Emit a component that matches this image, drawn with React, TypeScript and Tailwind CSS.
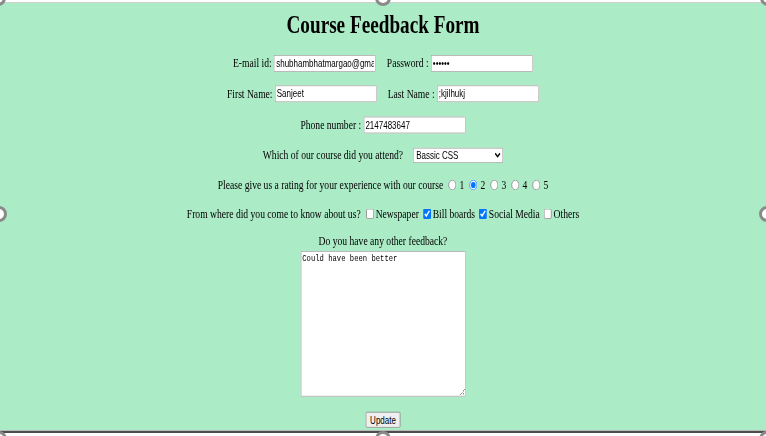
const field =
  "h-[21px] w-[170px] border border-[#a9a9a9] bg-white px-[2px] text-[13.33px] text-black font-['Liberation_Sans',Arial,sans-serif] outline-none"

function Handle({ className }: { className: string }) {
  return (
    <div
      className={
        "absolute h-[16px] w-[16px] rounded-full border-[3px] border-[#8a8a8a] bg-white " +
        className
      }
    />
  )
}

function Row({ h, children }: { h: string; children: React.ReactNode }) {
  return <div className={"flex items-center justify-center whitespace-nowrap " + h}>{children}</div>
}

export default function App() {
  const ratings = ['1', '2', '3', '4', '5']
  const sources = [
    { label: 'Newspaper', checked: false },
    { label: 'Bill boards', checked: true },
    { label: 'Social Media', checked: true },
    { label: 'Others', checked: false },
  ]

  return (
    <div className="relative h-[436px] w-full overflow-hidden bg-white">
      <div className="h-[3px] border-b border-[#d0d0d0]" />

      {/* page body, stretched like the reference image */}
      <div className="flex h-[427px] justify-center overflow-hidden bg-[#abebc6]">
        <div className="w-[1276px] shrink-0 origin-top scale-x-[0.6] scale-y-[0.8] font-['Liberation_Serif','Times_New_Roman',serif] text-[16px] text-black">
          <h1 className="h-[56px] pt-[3px] text-center text-[32px] font-bold leading-normal">
            Course Feedback Form
          </h1>

          <Row h="h-[38px]">
            <span>E-mail id:</span>
            <input className={field + ' ml-[4px] w-[168px]'} defaultValue="shubhambhatmargao@gmail.com" />
            <span className="ml-[18px]">Password :</span>
            <input type="password" className={field + ' ml-[4px]'} defaultValue="123456" />
          </Row>

          <Row h="h-[39px]">
            <span>First Name:</span>
            <input className={field + ' ml-[4px] w-[168px]'} defaultValue="Sanjeet" />
            <span className="ml-[18px]">Last Name :</span>
            <input className={field + ' ml-[4px]'} defaultValue=";kjilhukj" />
          </Row>

          <Row h="h-[38px]">
            <span>Phone number :</span>
            <input className={field + ' ml-[4px]'} defaultValue="2147483647" />
          </Row>

          <Row h="h-[38px]">
            <span>Which of our course did you attend?</span>
            <select
              defaultValue="css"
              className="ml-[17px] h-[19px] w-[150px] border border-[#a9a9a9] bg-white text-[13.33px] font-['Liberation_Sans',Arial,sans-serif]"
            >
              <option value="html">Basic HTML</option>
              <option value="css">Bassic CSS</option>
              <option value="js">Basic JavaScript</option>
            </select>
          </Row>

          <Row h="h-[36px]">
            <span>Please give us a rating for your experience with our course</span>
            {ratings.map((r) => (
              <label key={r} className="ml-[9px] flex items-center">
                <input type="radio" name="rating" defaultChecked={r === '2'} className="m-0 h-[13px] w-[13px]" />
                <span className="ml-[5px]">{r}</span>
              </label>
            ))}
          </Row>

          <Row h="h-[37px]">
            <span>From where did you come to know about us?</span>
            {sources.map((s, i) => (
              <label key={s.label} className={(i === 0 ? 'ml-[9px]' : 'ml-[7px]') + ' flex items-center'}>
                <input type="checkbox" defaultChecked={s.checked} className="m-0 h-[13px] w-[13px]" />
                <span className="ml-[3px]">{s.label}</span>
              </label>
            ))}
          </Row>

          <div className="flex h-[28px] items-end justify-center">
            <span className="leading-normal">Do you have any other feedback?</span>
          </div>

          <div className="flex justify-center">
            <textarea
              className="h-[182px] w-[275px] border border-[#a9a9a9] bg-white p-[2px] text-[12px] leading-[15px] text-black font-['Liberation_Mono','Courier_New',monospace] outline-none"
              defaultValue="Could have been better"
            />
          </div>

          <div className="mt-[19px] flex justify-center">
            <button className="h-[20px] w-[58px] rounded-[2px] border border-[#767676] bg-[#efefef] text-[13.33px] text-black font-['Liberation_Sans',Arial,sans-serif]">
              Update
            </button>
          </div>
        </div>
      </div>

      <div className="h-[1px] bg-[#b8b8b8]" />
      <div className="h-[2px] bg-[#4d4d4d]" />

      {/* selection frame handles */}
      <Handle className="left-[-10px] top-[-10px]" />
      <Handle className="left-[375px] top-[-10px]" />
      <Handle className="right-[-10px] top-[-10px]" />
      <Handle className="left-[-9px] top-[206px]" />
      <Handle className="right-[-9px] top-[206px]" />
      <Handle className="bottom-[-11px] left-[-9px]" />
      <Handle className="bottom-[-11px] left-[375px]" />
      <Handle className="bottom-[-11px] right-[-9px]" />
    </div>
  )
}
